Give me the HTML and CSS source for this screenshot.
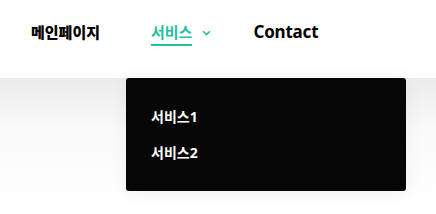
FILE: index.html
```html
<!DOCTYPE html>
<html lang="ko">
  <head>
    <meta charset="UTF-8" />
    <meta name="viewport" content="width=device-width, initial-scale=1.0" />
    <title>메인페이지</title>
    <link rel="stylesheet" href="styles.css">
  </head>
  <body>
    <header class="header">
      <nav class="nav">
        <a class="navItem kor" href="#">메인페이지</a>
        <div class="navItem hasSub">
          <a class="active" href="#">서비스</a>
          <svg class="chevron" width="9" height="6" viewBox="0 0 9 6">
            <path d="M1 1.2 L4.5 4.6 L8 1.2" fill="none" stroke="#22bfa0" stroke-width="1.5" />
          </svg>
          <!-- 서브메뉴 -->
          <ul class="subMenu">
            <li><a href="#">서비스1</a></li>
            <li><a href="#">서비스2</a></li>
          </ul>
        </div>
        <a class="navItem contact" href="#">Contact</a>
      </nav>
    </header>
    <main class="content"></main>
  </body>
</html>
```

FILE: styles.css
```css
* {
  box-sizing: border-box;
}
body {
  margin: 0;
  font-family: "Noto Sans", "Noto Sans CJK KR", sans-serif;
  background: #fff;
}
a {
  color: inherit;
  text-decoration: none;
}
.header {
  height: 78px;
  background: #fff;
  position: relative;
  z-index: 2;
}
.nav {
  display: flex;
  align-items: center;
  height: 100%;
  padding-left: 31px;
  padding-bottom: 14px;
}
.navItem {
  font-size: 15px;
  font-weight: 700;
  line-height: 20px;
  color: #000;
}
.kor {
  font-weight: 900;
}
.hasSub {
  position: relative;
  display: flex;
  align-items: center;
  margin-left: 51px;
}
.active {
  color: #22bfa0;
  position: relative;
}
.active::after {
  content: "";
  position: absolute;
  left: 0;
  right: 0;
  bottom: -4px;
  height: 2px;
  background: #22bfa0;
}
.chevron {
  margin-left: 10px;
  margin-top: 1px;
}
.contact {
  margin-left: 42px;
  font-size: 17px;
  letter-spacing: -0.2px;
}
.subMenu {
  position: absolute;
  top: 56px;
  left: -25px;
  width: 280px;
  height: 113px;
  margin: 0;
  padding: 30px 25px;
  list-style: none;
  background: #060606;
  border-radius: 3px;
  box-shadow: 0 0 18px rgba(0, 0, 0, 0.06);
}
.subMenu li {
  font-size: 14px;
  font-weight: 700;
  color: #fff;
  line-height: 18px;
  margin-bottom: 18px;
}
.content {
  height: 136px;
  background: linear-gradient(#ececec, #fafafa 40%, #fff);
}
```
